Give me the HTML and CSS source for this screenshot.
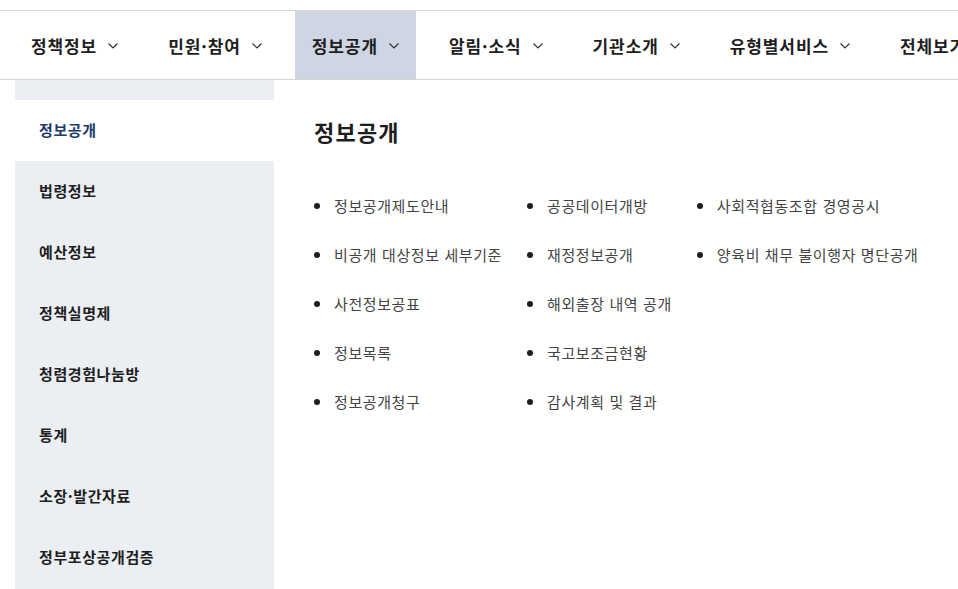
FILE: index.html
```html
<!DOCTYPE html>
<html lang="ko">
<head>
    <meta charset="UTF-8">
    <meta name="viewport" content="width=device-width, initial-scale=1.0">
    <title>정보공개</title>
    <link rel="stylesheet" href="styles.css">
</head>
<body>
    <header class="gnb">
        <ul class="gnb-list">
            <li class="gnb-item">정책정보 <svg class="chev" viewBox="0 0 10 6"><polyline points="0.5,0.5 5,5 9.5,0.5"/></svg></li>
            <li class="gnb-item">민원·참여 <svg class="chev" viewBox="0 0 10 6"><polyline points="0.5,0.5 5,5 9.5,0.5"/></svg></li>
            <li class="gnb-item active">정보공개 <svg class="chev" viewBox="0 0 10 6"><polyline points="0.5,0.5 5,5 9.5,0.5"/></svg></li>
            <li class="gnb-item">알림·소식 <svg class="chev" viewBox="0 0 10 6"><polyline points="0.5,0.5 5,5 9.5,0.5"/></svg></li>
            <li class="gnb-item">기관소개 <svg class="chev" viewBox="0 0 10 6"><polyline points="0.5,0.5 5,5 9.5,0.5"/></svg></li>
            <li class="gnb-item">유형별서비스 <svg class="chev" viewBox="0 0 10 6"><polyline points="0.5,0.5 5,5 9.5,0.5"/></svg></li>
            <li class="gnb-item">전체보기</li>
        </ul>
    </header>

    <div class="layout">
        <nav class="lnb">
            <ul>
                <li class="lnb-item active">정보공개</li>
                <li class="lnb-item">법령정보</li>
                <li class="lnb-item">예산정보</li>
                <li class="lnb-item">정책실명제</li>
                <li class="lnb-item">청렴경험나눔방</li>
                <li class="lnb-item">통계</li>
                <li class="lnb-item">소장·발간자료</li>
                <li class="lnb-item">정부포상공개검증</li>
            </ul>
        </nav>

        <main class="content">
            <h2 class="title">정보공개</h2>
            <div class="sub-menu">
                <ul>
                    <li>정보공개제도안내</li>
                    <li>비공개 대상정보 세부기준</li>
                    <li>사전정보공표</li>
                    <li>정보목록</li>
                    <li>정보공개청구</li>
                </ul>
                <ul>
                    <li>공공데이터개방</li>
                    <li>재정정보공개</li>
                    <li>해외출장 내역 공개</li>
                    <li>국고보조금현황</li>
                    <li>감사계획 및 결과</li>
                </ul>
                <ul>
                    <li>사회적협동조합 경영공시</li>
                    <li>양육비 채무 불이행자 명단공개</li>
                </ul>
            </div>
        </main>
    </div>
</body>
</html>
```

FILE: styles.css
```css
:root {
    --line: #d9d9d9;
    --active-tab: #cdd6e2;
    --side-bg: #ebeff4;
    --navy: #1b3a6b;
    --text: #1e1e1e;
    --text-sub: #444;
}

* {
    margin: 0;
    padding: 0;
    box-sizing: border-box;
}

ul {
    list-style: none;
}

body {
    font-family: "Noto Sans CJK KR", "Noto Sans", sans-serif;
    color: var(--text);
    background: #fff;
    overflow: hidden;
}

.gnb {
    margin-top: 10px;
    border-top: 1px solid var(--line);
    border-bottom: 1px solid #d4d4d4;
}

.gnb-list {
    display: flex;
    gap: 16px;
    padding-left: 14px;
    height: 68px;
    white-space: nowrap;
}

.gnb-item {
    display: flex;
    align-items: center;
    gap: 11px;
    padding: 0 17px;
    font-size: 17px;
    font-weight: 700;
    letter-spacing: 0.9px;
}

.gnb-item.active {
    background: var(--active-tab);
}

.chev {
    width: 10px;
    height: 6px;
    margin-top: 2px;
    fill: none;
    stroke: #333;
    stroke-width: 1.2;
}

.layout {
    display: flex;
}

.lnb {
    width: 259px;
    margin-left: 15px;
    padding: 20px 0 4px;
    background: var(--side-bg);
    flex-shrink: 0;
}

.lnb-item {
    height: 61px;
    display: flex;
    align-items: center;
    padding: 0 0 3px 24px;
    font-size: 15px;
    font-weight: 700;
    letter-spacing: 0.6px;
    color: var(--text);
}

.lnb-item.active {
    background: #fff;
    color: var(--navy);
}

.content {
    padding: 36px 0 0 40px;
}

.title {
    font-size: 22px;
    line-height: 30px;
    font-weight: 700;
    letter-spacing: 1.2px;
    color: var(--text);
    margin-bottom: 35px;
}

.sub-menu {
    display: flex;
    gap: 25px;
    white-space: nowrap;
}

.sub-menu li {
    height: 49px;
    display: flex;
    align-items: center;
    font-size: 15px;
    letter-spacing: 0.6px;
    color: var(--text-sub);
}

.sub-menu li::before {
    content: "";
    width: 6px;
    height: 6px;
    border-radius: 50%;
    background: var(--text);
    margin-right: 14px;
}
```
